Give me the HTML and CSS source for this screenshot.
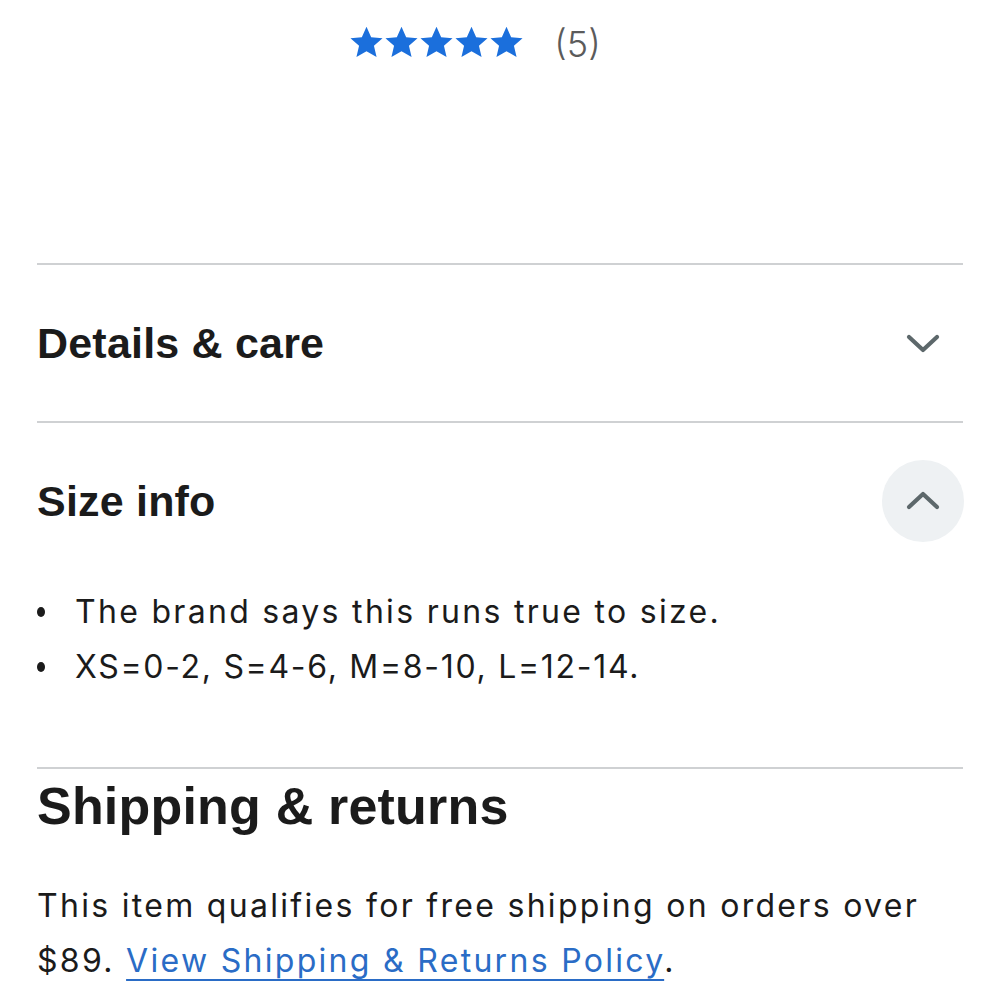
FILE: index.html
```html
<!DOCTYPE html>
<html>
<head>
<meta charset="utf-8">
<link rel="stylesheet" href="styles.css">
</head>
<body>
<div class="page">
  <div class="rating">
    <div class="stars">
      <svg viewBox="0 0 24 24" class="star"><path d="M12 1.2l3.2 7.2 7.8.7-5.9 5.2 1.8 7.7L12 18l-6.9 4 1.8-7.7L1 9.1l7.8-.7z"/></svg>
      <svg viewBox="0 0 24 24" class="star"><path d="M12 1.2l3.2 7.2 7.8.7-5.9 5.2 1.8 7.7L12 18l-6.9 4 1.8-7.7L1 9.1l7.8-.7z"/></svg>
      <svg viewBox="0 0 24 24" class="star"><path d="M12 1.2l3.2 7.2 7.8.7-5.9 5.2 1.8 7.7L12 18l-6.9 4 1.8-7.7L1 9.1l7.8-.7z"/></svg>
      <svg viewBox="0 0 24 24" class="star"><path d="M12 1.2l3.2 7.2 7.8.7-5.9 5.2 1.8 7.7L12 18l-6.9 4 1.8-7.7L1 9.1l7.8-.7z"/></svg>
      <svg viewBox="0 0 24 24" class="star"><path d="M12 1.2l3.2 7.2 7.8.7-5.9 5.2 1.8 7.7L12 18l-6.9 4 1.8-7.7L1 9.1l7.8-.7z"/></svg>
    </div>
    <span class="count">(5)</span>
  </div>

  <section class="acc">
    <div class="acc-head">
      <h2 class="acc-title">Details &amp; care</h2>
      <span class="acc-btn">
        <svg viewBox="0 0 40 40" class="chev"><path d="M6 14l14 13 14-13"/></svg>
      </span>
    </div>
  </section>

  <section class="acc">
    <div class="acc-head">
      <h2 class="acc-title">Size info</h2>
      <span class="acc-btn open">
        <svg viewBox="0 0 40 40" class="chev"><path d="M6 26l14-13 14 13"/></svg>
      </span>
    </div>
    <ul class="acc-list">
      <li class="wide">The brand says this runs true to size.</li>
      <li class="mid">XS=0-2, S=4-6, M=8-10, L=12-14.</li>
    </ul>
  </section>

  <section class="ship">
    <h2 class="ship-title">Shipping &amp; returns</h2>
    <p class="ship-text">This item qualifies for free shipping on orders over $89. <a href="#" class="link">View Shipping &amp; Returns Policy</a>.</p>
  </section>
</div>
</body>
</html>
```

FILE: styles.css
```css
* { box-sizing: border-box; }
html, body { margin: 0; padding: 0; background: #fff; }
body {
  font-family: Inter, "Liberation Sans", sans-serif;
  color: #1b1b1b;
}
.page {
  padding: 0 37px;
}
.rating {
  height: 263px;
  display: flex;
  justify-content: center;
  align-items: flex-start;
  padding-top: 25px;
  padding-right: 50px;
  gap: 30px;
}
.stars {
  display: flex;
}
.star {
  width: 35px;
  height: 35px;
  fill: #1b6fdc;
}
.count {
  font-size: 36px;
  color: #5b5b5b;
  line-height: 38px;
  font-weight: 300;
}
.acc {
  border-top: 2px solid #cfd1d3;
}
.acc-head {
  height: 156px;
  display: flex;
  align-items: center;
  justify-content: space-between;
}
.acc-title {
  margin: 0;
  font-family: "Liberation Sans", Arial, sans-serif;
  font-weight: 700;
  font-size: 43px;
  letter-spacing: 0.2px;
  color: #1b1b1b;
}
.acc-btn {
  width: 82px;
  height: 82px;
  border-radius: 50%;
  display: flex;
  align-items: center;
  justify-content: center;
  margin-right: -1px;
}
.acc-btn.open { background: #eef1f3; }
.chev {
  width: 40px;
  height: 40px;
  fill: none;
  stroke: #5d686b;
  stroke-width: 4.2;
  stroke-linecap: round;
  stroke-linejoin: round;
}
.acc-list {
  list-style: none;
  margin: 0;
  padding: 5px 0 73px 0;
  font-size: 32px;
  line-height: 55px;
}
.acc-list li {
  display: flex;
  align-items: center;
}
.acc-list li::before {
  content: "";
  width: 8px;
  height: 10px;
  border-radius: 50%;
  background: #1b1b1b;
  margin: 0 30px 0 0;
  flex: none;
}
.acc-list .wide { letter-spacing: 2.3px; }
.acc-list .mid { letter-spacing: 1.7px; }
.ship {
  border-top: 2px solid #cfd1d3;
}
.ship-title {
  margin: 0;
  padding-top: 7px;
  font-family: "Liberation Sans", Arial, sans-serif;
  font-weight: 700;
  font-size: 52px;
  line-height: 60px;
  letter-spacing: 0.2px;
  color: #1b1b1b;
}
.ship-text {
  margin: 42px 0 0;
  font-size: 32px;
  line-height: 55px;
  letter-spacing: 2.3px;
}
.link {
  color: #2a6cc6;
  text-decoration: underline;
  text-decoration-thickness: 2px;
  text-underline-offset: 7px;
}
```
